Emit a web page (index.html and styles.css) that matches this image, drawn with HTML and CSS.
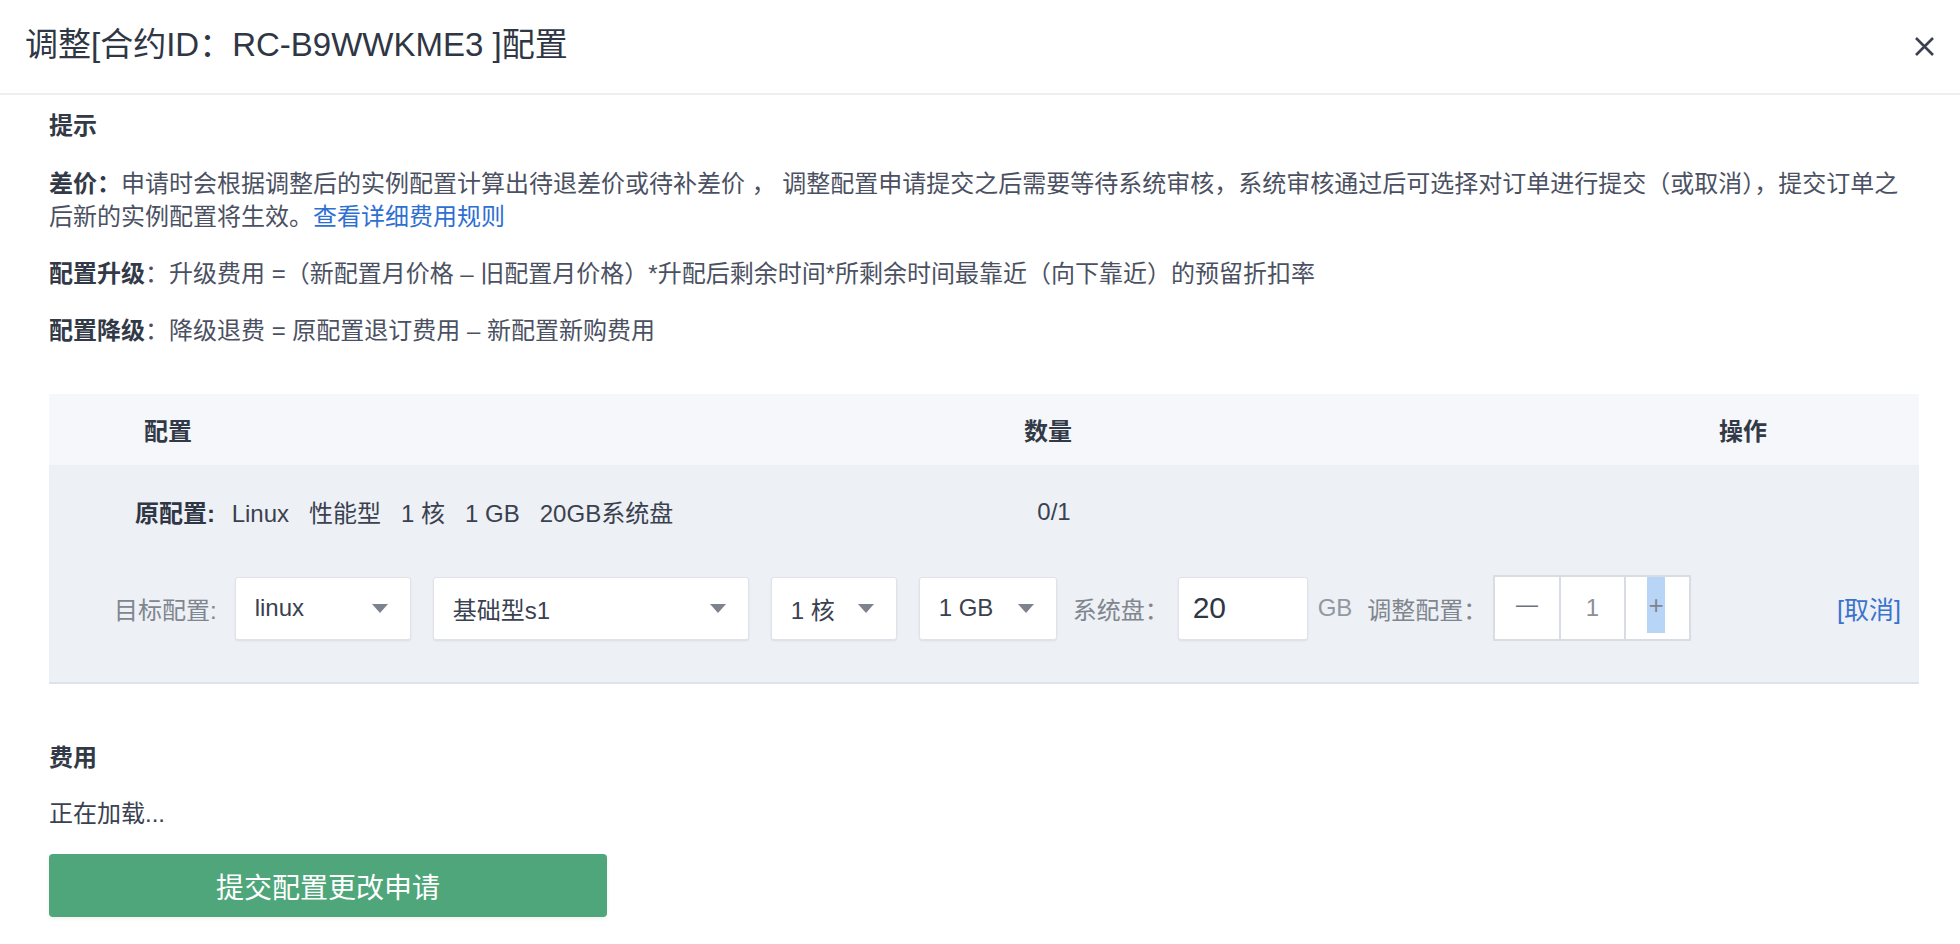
FILE: index.html
```html
<!DOCTYPE html>
<html lang="zh-CN">
<head>
<meta charset="utf-8">
<title>调整配置</title>
<link rel="stylesheet" href="styles.css">
</head>
<body>
<div class="modal">
  <div class="header">
    <div class="title">调整[合约ID：RC-B9WWKME3 ]配置</div>
    <svg class="close" width="21" height="21" viewBox="0 0 21 21"><path d="M2 2 L19 19 M19 2 L2 19" stroke="#3a4150" stroke-width="2.6" fill="none"/></svg>
  </div>
  <div class="body">
    <div class="sec-title">提示</div>
    <p class="para"><b>差价：</b><span>申请时会根据调整后的实例配置计算出待退差价或待补差价 ， 调整配置申请提交之后需要等待系统审核，系统审核通过后可选择对订单进行提交（或取消），提交订单之</span><br><span>后新的实例配置将生效。</span><a class="link">查看详细费用规则</a></p>
    <p class="para"><b>配置升级</b>：升级费用 =（新配置月价格 – 旧配置月价格）*升配后剩余时间*所剩余时间最靠近（向下靠近）的预留折扣率</p>
    <p class="para"><b>配置降级</b>：降级退费 = 原配置退订费用 – 新配置新购费用</p>

    <div class="table">
      <div class="thead">
        <div class="c1">配置</div>
        <div class="c2">数量</div>
        <div class="c3">操作</div>
      </div>
      <div class="tbody">
        <div class="row1">
          <div class="c1"><b>原配置:</b><span class="orig"> Linux   性能型   1 核   1 GB   20GB系统盘</span></div>
          <div class="c2">0/1</div>
          <div class="c3"></div>
        </div>
        <div class="row2">
          <span class="lbl">目标配置:</span>
          <div class="sel w1"><span>linux</span><i class="arr"></i></div>
          <div class="sel w2"><span>基础型s1</span><i class="arr"></i></div>
          <div class="sel w3"><span>1 核</span><i class="arr"></i></div>
          <div class="sel w4"><span>1 GB</span><i class="arr"></i></div>
          <span class="lbl l2">系统盘：</span>
          <div class="input">20</div>
          <span class="lbl l3">GB</span>
          <span class="lbl l4">调整配置：</span>
          <div class="stepper">
            <div class="cell minus">—</div>
            <div class="cell num">1</div>
            <div class="cell plus"><span class="hl">+</span></div>
          </div>
          <a class="cancel">[取消]</a>
        </div>
      </div>
    </div>

    <div class="sec-title fee">费用</div>
    <div class="loading">正在加载...</div>
    <button class="submit">提交配置更改申请</button>
  </div>
</div>
</body>
</html>
```
FILE: styles.css
```css
* { box-sizing: border-box; }
html, body { margin: 0; padding: 0; background: #fff; }
body {
  font-family: "Liberation Sans", "Noto Sans CJK SC", sans-serif;
  color: #4b5162;
  font-size: 24px;
}
.modal { width: 1960px; height: 944px; overflow: hidden; }
.header {
  height: 95px;
  display: flex;
  align-items: center;
  justify-content: space-between;
  padding: 0 25px 10px 25px;
  border-bottom: 2px solid #eceef1;
}
.title { font-size: 33px; color: #2f3644; }
.close { margin-top: 10px; }
.body { padding: 0 41px 0 49px; }
.sec-title {
  margin-top: 14px;
  line-height: 34px;
  font-weight: bold;
  color: #333a47;
  font-size: 24px;
}
.para {
  margin: 24px 0 0 0;
  line-height: 33px;
  font-size: 24px;
  color: #4b5162;
  white-space: nowrap;
}
.para b { color: #333a47; display: inline-block; }
.link { color: #2e6fd2; display: inline-block; }
.table { margin-top: 47px; }
.thead {
  height: 71px;
  background: #f5f7fa;
  display: grid;
  grid-template-columns: 899px 200px 1fr;
  align-items: center;
  color: #333a47;
  font-weight: bold;
}
.thead .c1 { padding-left: 95px; }
.thead .c2 { text-align: center; }
.thead .c3 { text-align: right; padding-right: 152px; }
.tbody {
  background: #edf0f4;
  border-bottom: 2px solid #dde3ec;
  height: 219px;
  padding-top: 29px;
}
.row1 {
  display: grid;
  grid-template-columns: 899px 200px 1fr;
  align-items: center;
  height: 34px;
  color: #3a4150;
}
.row1 .c1 { padding-left: 86px; }
.row1 b { color: #2f3644; }
.orig { white-space: pre; padding-left: 10px; }
.row1 .c2 { text-align: center; padding-left: 12px; }
.row2 {
  display: flex;
  align-items: center;
  margin-top: 48px;
  padding-left: 65px;
  padding-right: 18px;
  height: 64px;
}
.lbl { color: #80868f; }
.sel {
  height: 63px;
  background: #fff;
  border: 1px solid #dfe3e9;
  border-radius: 3px;
  box-shadow: 0 1px 2px rgba(0,0,0,0.08);
  display: flex;
  align-items: center;
  justify-content: space-between;
  padding: 0 22px 0 19px;
  color: #3a4150;
  margin-left: 22px;
}
.sel:first-of-type { margin-left: 18px; }
.w1 { width: 176px; }
.w2 { width: 316px; }
.w3 { width: 126px; }
.w4 { width: 138px; }
.arr {
  width: 0; height: 0;
  border-left: 8px solid transparent;
  border-right: 8px solid transparent;
  border-top: 9px solid #7d838d;
}
.l2 { margin-left: 16px; }
.input {
  width: 130px;
  height: 63px;
  margin-left: 9px;
  background: #fff;
  border: 1px solid #dfe3e9;
  border-radius: 3px;
  box-shadow: 0 1px 2px rgba(0,0,0,0.08);
  display: flex;
  align-items: center;
  padding-left: 14px;
  font-size: 30px;
  color: #2f3644;
}
.l3 { margin-left: 10px; color: #9298a2; }
.l4 { margin-left: 15px; }
.stepper {
  margin-left: 6px;
  display: grid;
  grid-template-columns: 1fr 1fr 1fr;
  width: 198px;
  height: 66px;
  border: 2px solid #d9dde3;
  background: #d9dde3;
  gap: 2px;
}
.cell {
  background: #fff;
  display: flex;
  align-items: center;
  justify-content: center;
  color: #7f858f;
}
.minus { font-size: 22px; color: #6c727c; padding-bottom: 6px; }
.num { font-size: 24px; color: #8a9099; }
.plus { justify-content: flex-start; padding-left: 21px; align-items: stretch; padding-bottom: 6px; }
.hl {
  background: #b8d5f8;
  width: 18px;
  display: flex;
  align-items: center;
  justify-content: center;
  color: #7f858f;
  font-size: 26px;
}
.cancel { margin-left: auto; color: #3a73cf; font-size: 25px; }
.fee { margin-top: 57px; }
.loading { margin-top: 22px; line-height: 34px; color: #3a4150; }
.submit {
  margin-top: 23px;
  width: 558px;
  height: 63px;
  background: #4fa67a;
  border: none;
  border-radius: 4px;
  color: #fff;
  font-family: "Liberation Sans", "Noto Sans CJK SC", sans-serif;
  font-size: 28px;
  display: block;
  box-shadow: 0 2px 4px rgba(0,0,0,0.06);
}
```
